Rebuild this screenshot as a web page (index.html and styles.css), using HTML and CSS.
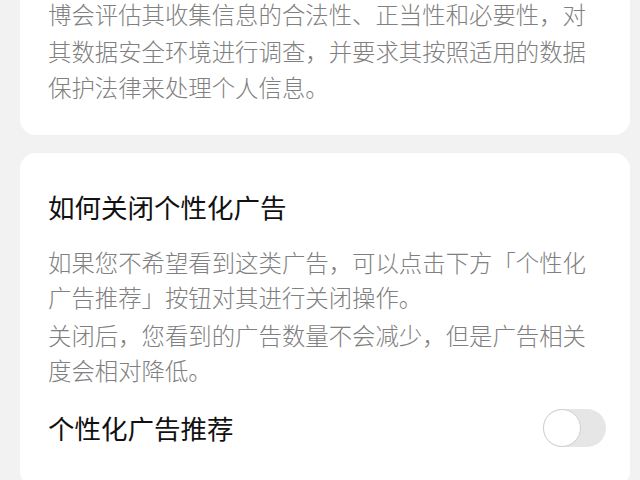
FILE: index.html
```html
<!DOCTYPE html>
<html lang="zh-CN">
<head>
  <meta charset="UTF-8">
  <meta name="viewport" content="width=device-width, initial-scale=1.0">
  <title>个性化广告</title>
  <link rel="stylesheet" href="styles.css">
</head>
<body>

  <div class="page">
    <div class="card card-top">
      <p class="desc">博会评估其收集信息的合法性、正当性和必要性，对其数据安全环境进行调查，并要求其按照适用的数据保护法律来处理个人信息。</p>
    </div>

    <div class="card">
      <h2 class="card-title">如何关闭个性化广告</h2>
      <p class="desc">如果您不希望看到这类广告，可以点击下方「个性化广告推荐」按钮对其进行关闭操作。</p>
      <p class="desc desc-next">关闭后，您看到的广告数量不会减少，但是广告相关度会相对降低。</p>
      <div class="switch-row">
        <span class="switch-label">个性化广告推荐</span>
        <div class="switch">
          <div class="switch-knob"></div>
        </div>
      </div>
    </div>
  </div>

</body>
</html>
```

FILE: styles.css
```css
body {
  margin: 0;
  background: #f2f2f2;
  font-family: "Noto Sans CJK SC", "Noto Sans", sans-serif;
  overflow: hidden;
}

.page {
  display: flex;
  flex-direction: column;
  gap: 18px;
  padding: 0 10px 0 20px;
  margin-top: -4px;
}

.card {
  background: #ffffff;
  border-radius: 16px;
  padding: 36px 24px 40px 28px;
}

.card-top {
  border-radius: 0 0 16px 16px;
  padding-top: 0;
  padding-bottom: 29px;
}

.card-top .desc {
  line-height: 36.5px;
}

.desc {
  margin: 0;
  font-size: 23.4px;
  font-weight: 300;
  line-height: 35px;
  color: #808080;
}

.desc-next {
  margin-top: 3px;
}

.card-title {
  margin: 0 0 20px;
  font-size: 26.5px;
  font-weight: 400;
  line-height: 36px;
  color: #111111;
}

.switch-row {
  display: flex;
  align-items: center;
  justify-content: space-between;
  margin-top: 21px;
  height: 38px;
}

.switch-label {
  font-size: 26.5px;
  font-weight: 400;
  color: #111111;
}

.switch {
  width: 63px;
  height: 38px;
  border-radius: 19px;
  background: #e6e6e6;
  display: flex;
  align-items: center;
}

.switch-knob {
  width: 36px;
  height: 36px;
  border-radius: 50%;
  background: #ffffff;
  border: 1px solid #cfcfcf;
}
```
